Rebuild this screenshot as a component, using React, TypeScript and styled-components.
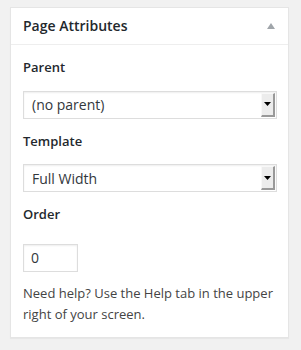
import React from "react";
import styled, { createGlobalStyle } from "styled-components";

const Global = createGlobalStyle`
  html, body { margin: 0; padding: 0; background: #f1f1f1; }
  body { font-family: "Open Sans", "Liberation Sans", sans-serif; color: #444; }
`;

const Page = styled.div`
  width: 301px;
  height: 350px;
  padding: 7px 0 0 10px;
  box-sizing: border-box;
`;

const Card = styled.div`
  width: 279px;
  background: #fff;
  border: 1px solid #e5e5e5;
  box-shadow: 0 1px 1px rgba(0, 0, 0, 0.04);
  box-sizing: border-box;
`;

const Header = styled.div`
  height: 36px;
  display: flex;
  align-items: center;
  justify-content: space-between;
  padding: 0 13px 0 12px;
  border-bottom: 1px solid #eee;
`;

const Title = styled.h2`
  margin: 0;
  font-size: 14px;
  font-weight: 600;
  color: #23282d;
  line-height: 1.4;
`;

const Toggle = styled.svg`
  width: 8px;
  height: 6px;
  display: block;
`;

const Body = styled.div`
  padding: 0 12px 12px;
`;

const Label = styled.p`
  margin: 13px 0;
  font-size: 13px;
  line-height: 1.5;
  font-weight: 600;
  color: #23282d;
`;

const SelectBox = styled.div`
  width: 254px;
  height: 28px;
  display: flex;
  align-items: stretch;
  border: 1px solid #ddd;
  box-shadow: inset 0 1px 2px rgba(0, 0, 0, 0.07);
  box-sizing: border-box;
  background: #fff;
  padding: 1px;
`;

const SelectValue = styled.span`
  flex: 1;
  display: flex;
  align-items: center;
  padding-left: 7px;
  font-size: 14px;
  color: #32373c;
`;

const SelectButton = styled.span`
  width: 14px;
  display: flex;
  align-items: center;
  justify-content: center;
  background: #ececec;
  border-top: 1px solid #f8f8f8;
  border-left: 1px solid #f8f8f8;
  border-right: 2px solid #999;
  border-bottom: 2px solid #999;
  box-sizing: border-box;
`;

const Arrow = styled.svg`
  width: 7px;
  height: 4px;
  display: block;
`;

const NumberBox = styled.div`
  width: 55px;
  height: 28px;
  margin-top: 19px;
  display: flex;
  align-items: center;
  padding-left: 7px;
  border: 1px solid #ddd;
  box-shadow: inset 0 1px 2px rgba(0, 0, 0, 0.07);
  box-sizing: border-box;
  font-size: 14px;
  color: #32373c;
`;

const Help = styled.p`
  margin: 11px 0 0;
  font-size: 13px;
  line-height: 21px;
  color: #444;
`;

const Select = ({ value }: { value: string }) => (
  <SelectBox>
    <SelectValue>{value}</SelectValue>
    <SelectButton>
      <Arrow viewBox="0 0 7 4">
        <path d="M0 0 H7 L3.5 4 Z" fill="#000" />
      </Arrow>
    </SelectButton>
  </SelectBox>
);

export default function App() {
  return (
    <>
      <Global />
      <Page>
        <Card>
          <Header>
            <Title>Page Attributes</Title>
            <Toggle viewBox="0 0 8 6">
              <path d="M4 0 L8 6 H0 Z" fill="#a0a5aa" />
            </Toggle>
          </Header>
          <Body>
            <Label>Parent</Label>
            <Select value="(no parent)" />
            <Label>Template</Label>
            <Select value="Full Width" />
            <Label>Order</Label>
            <NumberBox>0</NumberBox>
            <Help>Need help? Use the Help tab in the upper right of your screen.</Help>
          </Body>
        </Card>
      </Page>
    </>
  );
}
